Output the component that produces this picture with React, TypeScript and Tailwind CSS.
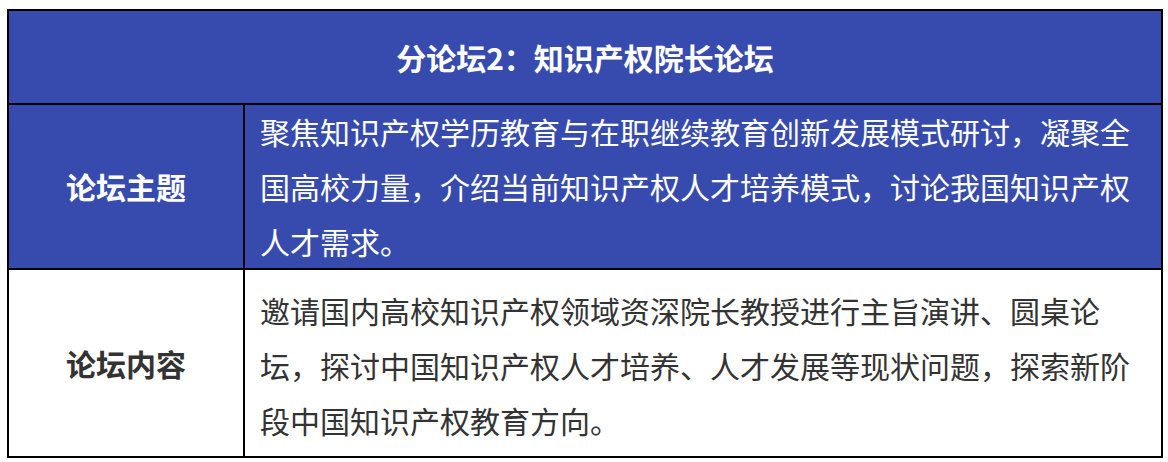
const rows = [
  {
    label: "论坛主题",
    text: "聚焦知识产权学历教育与在职继续教育创新发展模式研讨，凝聚全国高校力量，介绍当前知识产权人才培养模式，讨论我国知识产权人才需求。",
    dark: true,
  },
  {
    label: "论坛内容",
    text: "邀请国内高校知识产权领域资深院长教授进行主旨演讲、圆桌论坛，探讨中国知识产权人才培养、人才发展等现状问题，探索新阶段中国知识产权教育方向。",
    dark: false,
  },
];

export default function App() {
  return (
    <div className="min-h-screen bg-white pt-[9px] pl-[7px] font-['Noto_Sans_CJK_SC',sans-serif]">
      <div className="w-[1156px] border-2 border-black">
        {/* Title bar */}
        <div className="h-[94px] border-b-2 border-black bg-[#374bae] flex items-center justify-center">
          <h1 className="text-[30px] font-bold text-white">分论坛2：知识产权院长论坛</h1>
        </div>

        {rows.map((row, i) => (
          <div
            key={row.label}
            className={
              "grid grid-cols-[236px_1fr] " +
              (i < rows.length - 1 ? "border-b-2 border-black " : "") +
              (row.dark ? "bg-[#374bae] text-white" : "bg-white text-[#333333]")
            }
          >
            <div className="border-r-2 border-black flex items-center justify-center text-[30px] font-bold">
              {row.label}
            </div>
            <div
              className={
                "px-[15px] text-[30px] leading-[55px] " +
                (row.dark ? "h-[163px] flex items-center" : "pt-[13px] pb-[8px]")
              }
            >
              <p>{row.text}</p>
            </div>
          </div>
        ))}
      </div>
    </div>
  );
}
